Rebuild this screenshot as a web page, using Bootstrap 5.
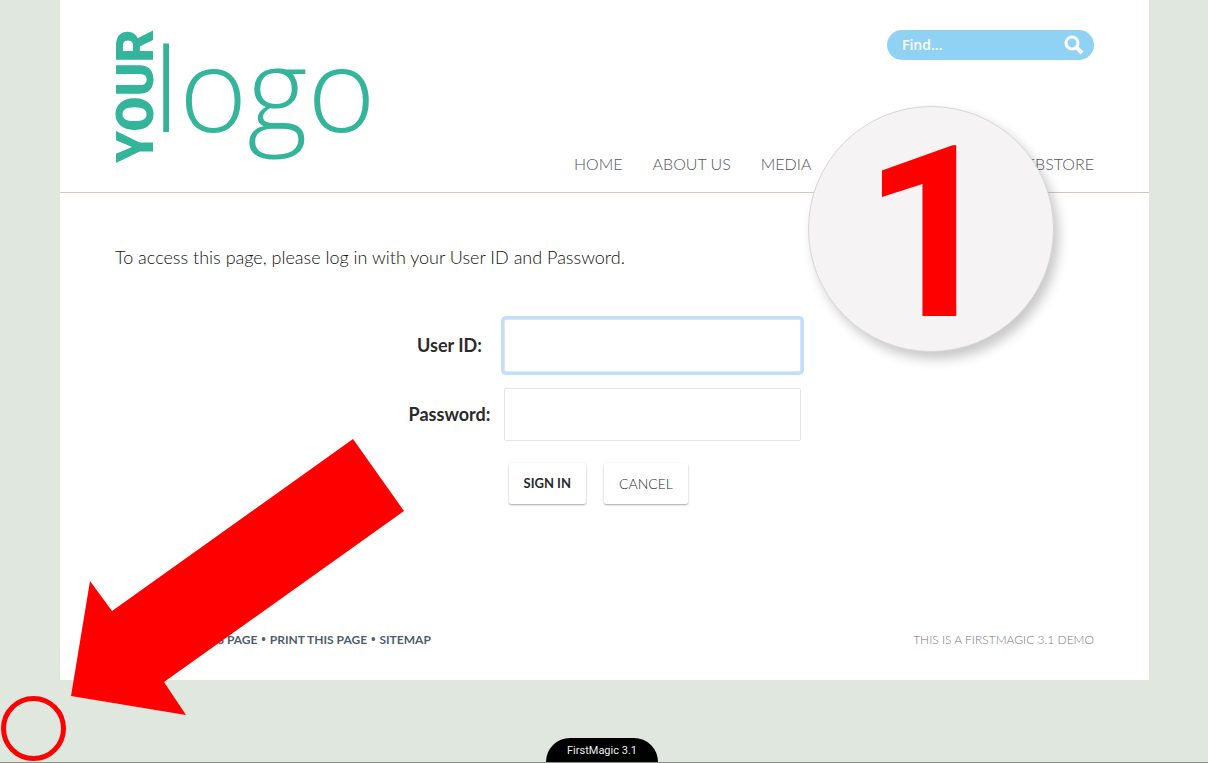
<!DOCTYPE html>
<html lang="en">
<head>
<meta charset="utf-8">
<meta name="viewport" content="width=device-width, initial-scale=1">
<title>FirstMagic 3.1</title>
<link href="https://cdn.jsdelivr.net/npm/bootstrap@5.3.0/dist/css/bootstrap.min.css" rel="stylesheet">
<style>
  body { background: #e0e7de; font-family: Lato, "Open Sans", sans-serif; color: #2b292e; border-bottom: 1px solid #8b8f8a; }
  .sheet { margin: 0 59px 0 60px; background: #fff; }
  .masthead { height: 193px; padding: 30px 55px 18px; border-bottom: 1px solid #d3c8c0; }
  .logo { width: 260px; height: 140px; fill: #33b59c; overflow: visible; }
  .logo-your { font: 900 51px Roboto, sans-serif; }
  .logo-word { font: 300 116px "Open Sans", sans-serif; }
  .find { width: 207px; height: 30px; background: #90d2f4; border-radius: 15px; padding: 0 10px 0 15px; }
  .find input { width: 100%; border: 0; outline: 0; background: none; color: #fff; font: 600 14px/20px "Open Sans", sans-serif; padding: 0; }
  .find input::placeholder { color: #fff; opacity: 1; }
  .find button { border: 0; background: none; padding: 0; line-height: 0; }
  .menu { width: 520px; font-size: 16px; line-height: 20px; font-weight: 300; gap: 30px; }
  .menu a { color: #55555a; text-decoration: none; white-space: nowrap; }
  .content-area { padding: 52px 55px 0; }
  .intro { font-size: 18px; line-height: 24px; font-weight: 300; color: #111; margin-bottom: 50px; }
  .login { display: grid; grid-template-columns: 94px 297px; column-gap: 7px; row-gap: 16px; justify-content: center; margin-right: 6px; }
  .login label { font-size: 18px; font-weight: 700; text-align: center; }
  .login .form-control { height: 53px; border: 1px solid #e5e5e5; border-radius: 2px; }
  .login .form-control:focus { box-shadow: 0 0 0 3px #bfdffc; border-color: #e0e2ee; }
  .actions { grid-column: 2; gap: 18px; padding: 6px 0 0 5px; }
  .actions .btn { height: 41px; padding: 0 15px; font-size: 13px; border: 0; border-radius: 2px; background: #fff; box-shadow: 0 1px 2px #00000059; color: #2b292e; }
  .actions .btn-light-text { font-size: 14px; font-weight: 300; }
  .sheet-foot { padding: 126px 55px 30px; font-size: 12px; line-height: 20px; }
  .sheet-foot a { color: #4e5e6e; text-decoration: none; }
  .sheet-foot .note { color: #777; font-weight: 300; }
  .dot { font-family: "Open Sans", sans-serif; color: #4e5e6e; margin: 0 1px; }
  .product { width: 112px; height: 24px; background: #000; color: #eee; border-radius: 24px 24px 0 0; font: 11px/25px Roboto, sans-serif; margin-right: 4px; }
  .step { width: 246px; height: 246px; left: 808px; top: 106px; border: 1px solid #d8d8d8; background: #f5f3f4; box-shadow: 5px 7px 12px #00000038; color: #f00; font: 700 240px/254px Roboto, sans-serif; }
  .arrow { left: 71px; top: 439px; width: 333px; height: 276px; fill: #f00; }
  .ring { left: 1px; top: 696px; width: 65px; height: 65px; border: 5px solid #f00; }
</style>
</head>
<body class="min-vh-100 d-flex flex-column position-relative">
<div class="sheet">
  <header class="masthead d-flex justify-content-between">
    <a href="#" aria-label="Your logo"><svg class="logo" viewBox="0 0 260 140">
      <text class="logo-your" transform="translate(38 133) rotate(-90)">YOUR</text>
      <text class="logo-word" x="38" y="102">logo</text>
    </svg></a>
    <div class="d-flex flex-column justify-content-between align-items-end">
      <form class="find d-flex align-items-center">
        <input type="text" placeholder="Find..." aria-label="Find">
        <button type="button" aria-label="Search"><svg width="20" height="20" viewBox="0 0 20 20" fill="none" stroke="#fff"><circle cx="8" cy="8" r="6" stroke-width="3"/><path d="M12 12l6 6" stroke-width="4" stroke-linecap="butt"/></svg></button>
      </form>
      <nav class="menu d-flex" aria-label="Main">
        <a href="#">HOME</a><a href="#">ABOUT US</a><a href="#">MEDIA</a><a class="ms-auto" href="#">WEBSTORE</a>
      </nav>
    </div>
  </header>
  <main class="content-area">
    <p class="intro">To access this page, please log in with your User ID and Password.</p>
    <form class="login align-items-center">
      <label for="user">User ID:</label>
      <input class="form-control" id="user" type="text" autofocus>
      <label for="pass">Password:</label>
      <input class="form-control" id="pass" type="password">
      <div class="actions d-flex">
        <button class="btn fw-bold" type="button">SIGN IN</button>
        <button class="btn btn-light-text" type="button">CANCEL</button>
      </div>
    </form>
  </main>
  <footer class="sheet-foot d-flex justify-content-between">
    <div class="fw-bold"><a href="#">RECOMMEND THIS PAGE</a> <span class="dot">•</span> <a href="#">PRINT THIS PAGE</a> <span class="dot">•</span> <a href="#">SITEMAP</a></div>
    <div class="note">THIS IS A FIRSTMAGIC 3.1 DEMO</div>
  </footer>
</div>
<div class="product mt-auto align-self-center text-center">FirstMagic 3.1</div>

<div class="step position-absolute rounded-circle text-center">1</div>
<svg class="arrow position-absolute" viewBox="0 0 333 276" aria-hidden="true"><path d="M282 0L333 72L93 243L115 276L0 257L19 142L41 172Z"/></svg>
<div class="ring position-absolute rounded-circle"></div>
<script src="https://cdn.jsdelivr.net/npm/bootstrap@5.3.0/dist/js/bootstrap.bundle.min.js"></script>
<script>document.getElementById('user').focus();</script>
</body>
</html>
